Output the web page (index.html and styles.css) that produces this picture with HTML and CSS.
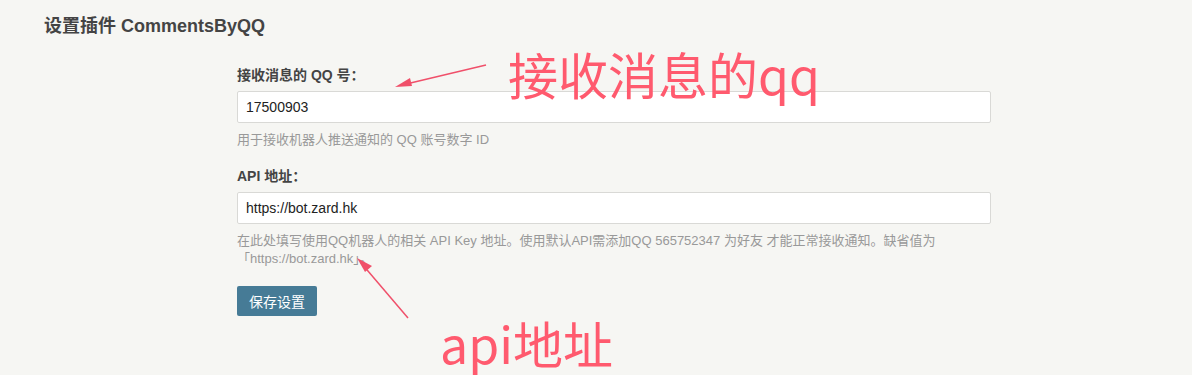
FILE: index.html
```html
<!DOCTYPE html>
<html lang="zh-CN">
<head>
<meta charset="utf-8">
<title>设置插件 CommentsByQQ</title>
<link rel="stylesheet" href="styles.css">
</head>
<body>
<div class="page">
  <h2 class="title">设置插件 CommentsByQQ</h2>
  <form class="form">
    <div class="field">
      <label class="label">接收消息的 QQ 号：</label>
      <input class="text" type="text" value="17500903">
      <p class="desc">用于接收机器人推送通知的 QQ 账号数字 ID</p>
    </div>
    <div class="field">
      <label class="label">API 地址：</label>
      <input class="text" type="text" value="https://bot.zard.hk">
      <p class="desc">在此处填写使用QQ机器人的相关 API Key 地址。使用默认API需添加QQ 565752347 为好友 才能正常接收通知。缺省值为<br>「https://bot.zard.hk」。</p>
    </div>
    <div class="actions">
      <button class="btn" type="button">保存设置</button>
    </div>
  </form>
  <div class="note note-qq">接收消息的qq</div>
  <div class="note note-api">api地址</div>
  <svg class="arrows" width="1192" height="375" viewBox="0 0 1192 375">
    <line x1="486" y1="65" x2="402" y2="85" stroke="#f0506a" stroke-width="1.5"/>
    <polygon points="395,87 410,78 412,86" fill="#f0506a"/>
    <line x1="408" y1="318" x2="362" y2="264" stroke="#f0506a" stroke-width="1.5"/>
    <polygon points="357,258 372,266 365,272" fill="#f0506a"/>
  </svg>
</div>
</body>
</html>
```
FILE: styles.css
```css
html, body {
  margin: 0;
  padding: 0;
  background: #f6f6f3;
}
body {
  font-family: "Liberation Sans", Arial, "Noto Sans CJK SC", sans-serif;
  color: #444;
  font-size: 13px;
}
.page {
  position: relative;
  width: 1192px;
  height: 375px;
  overflow: hidden;
}
.title {
  margin: 0;
  padding: 15px 0 0 44px;
  font-size: 18px;
  line-height: 22px;
  font-weight: bold;
  color: #444;
}
.form {
  margin: 29px 0 0 237px;
  width: 754px;
}
.field {
  margin-bottom: 18px;
}
.label {
  display: block;
  font-weight: bold;
  font-size: 14px;
  line-height: 18px;
  margin-bottom: 7px;
}
.text {
  display: block;
  box-sizing: border-box;
  width: 100%;
  height: 32px;
  padding: 0 8px;
  border: 1px solid #d9d9d6;
  border-radius: 2px;
  background: #fff;
  font-family: "Liberation Sans", Arial, "Noto Sans CJK SC", sans-serif;
  font-size: 14px;
  color: #222;
  outline: none;
}
.desc {
  margin: 8px 0 0;
  color: #999;
  font-size: 13px;
  line-height: 18px;
}
.actions {
  padding-top: 0;
}
.btn {
  height: 30px;
  padding: 0 12px;
  border: none;
  border-radius: 2px;
  background: #467b96;
  color: #fff;
  font-family: "Liberation Sans", Arial, "Noto Sans CJK SC", sans-serif;
  font-size: 14px;
  cursor: pointer;
}
.note {
  position: absolute;
  color: #ff5a6e;
  font-family: "Noto Sans CJK SC", sans-serif;
  font-size: 50px;
  line-height: 54px;
  white-space: nowrap;
}
.note-qq {
  left: 508px;
  top: 46px;
}
.note-api {
  left: 440px;
  top: 315px;
}
.arrows {
  position: absolute;
  left: 0;
  top: 0;
  pointer-events: none;
}
```
